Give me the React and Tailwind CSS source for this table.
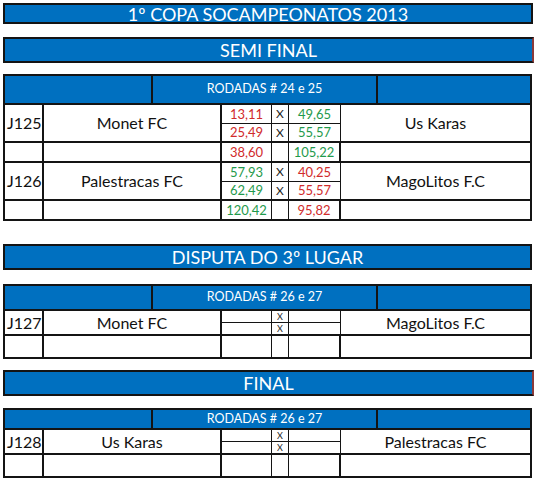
const font = { fontFamily: "Lato, 'Open Sans', 'Liberation Sans', sans-serif" };

const Bar = ({ text, className = "" }) => (
  <div
    className={`h-[26px] border-2 border-[#141414] bg-[#0070c0] flex items-center justify-center text-white text-[18px] leading-none ${className}`}
  >
    {text}
  </div>
);

const Score = ({ v, c, bottom }) => (
  <div
    className={`flex items-center justify-center text-[13px] leading-none border-r border-[#141414] ${bottom ? "border-b" : ""} ${c === "r" ? "text-[#d12b2b]" : "text-[#1f9a4c]"}`}
  >
    {v}
  </div>
);

const Xc = ({ show, bottom, small }) => (
  <div
    className={`flex items-center justify-center leading-none border-r border-[#141414] text-[#222] ${small ? "text-[9px]" : "text-[12px]"} ${bottom ? "border-b" : ""}`}
  >
    {show ? "X" : ""}
  </div>
);

const MatchRow = ({ id, home, away, s, sub, last }) => (
  <div
    className={`grid grid-cols-[39px_178px_50px_17px_52px_1fr] ${sub} ${last ? "" : "border-b-2 border-[#141414]"}`}
  >
    <div className="row-span-2 border-r-2 border-[#141414] flex items-center pl-[2px] text-[16px] text-[#111]">
      {id}
    </div>
    <div className="row-span-2 border-r-2 border-[#141414] flex items-center justify-center text-[16px] text-[#111]">
      {home}
    </div>
    <Score v={s ? s[0][0] : ""} c={s ? s[0][1] : "r"} bottom />
    <Xc show bottom small={!s} />
    <Score v={s ? s[0][2] : ""} c={s ? s[0][3] : "g"} bottom />
    <div className="row-span-2 flex items-center justify-center text-[16px] text-[#111]">
      {away}
    </div>
    <Score v={s ? s[1][0] : ""} c={s ? s[1][1] : "r"} />
    <Xc show small={!s} />
    <Score v={s ? s[1][2] : ""} c={s ? s[1][3] : "g"} />
  </div>
);

const TotalRow = ({ a, b, h, last }) => (
  <div
    className={`grid grid-cols-[39px_178px_50px_17px_52px_1fr] ${h} ${last ? "" : "border-b-2 border-[#141414]"}`}
  >
    <div className="border-r-2 border-[#141414]" />
    <div className="border-r-2 border-[#141414]" />
    <Score v={a ? a[0] : ""} c={a ? a[1] : "r"} />
    <Xc />
    <div
      className={`flex items-center justify-center text-[13px] leading-none border-r-2 border-[#141414] ${b && b[1] === "r" ? "text-[#d12b2b]" : "text-[#1f9a4c]"}`}
    >
      {b ? b[0] : ""}
    </div>
    <div />
  </div>
);

const Header = ({ text, h }) => (
  <div
    className={`grid grid-cols-[148px_225px_1fr] ${h} bg-[#0070c0] border-b-2 border-[#141414] text-white`}
  >
    <div className="border-r-2 border-[#141414]" />
    <div className="border-r-2 border-[#141414] flex items-center justify-center text-[12.5px] leading-none">
      {text}
    </div>
    <div />
  </div>
);

export default function App() {
  return (
    <div className="w-[535px] h-[483px] bg-white overflow-hidden" style={font}>
      <div className="pt-[3px] pl-[3px] w-[534px]">
        <div className="h-[21px] mr-[1px] border-2 border-[#141414] bg-[#0070c0] flex items-center justify-center text-white text-[18px] leading-none">
          1º COPA SOCAMPEONATOS 2013
        </div>

        <Bar text="SEMI FINAL" className="mt-[13px] border-r-[#8b3a3a]" />

        <div className="mt-[11px] mr-[2px] border-2 border-[#141414]">
          <Header text="RODADAS # 24 e 25" h="h-[29px]" />
          <MatchRow
            id="J125"
            home="Monet FC"
            away="Us Karas"
            sub="grid-rows-[19px_17px]"
            s={[
              ["13,11", "r", "49,65", "g"],
              ["25,49", "r", "55,57", "g"],
            ]}
          />
          <TotalRow a={["38,60", "r"]} b={["105,22", "g"]} h="h-[20px]" />
          <MatchRow
            id="J126"
            home="Palestracas FC"
            away="MagoLitos F.C"
            sub="grid-rows-[19px_17px]"
            s={[
              ["57,93", "g", "40,25", "r"],
              ["62,49", "g", "55,57", "r"],
            ]}
          />
          <TotalRow a={["120,42", "g"]} b={["95,82", "r"]} h="h-[18px]" last />
        </div>

        <Bar text="DISPUTA DO 3º LUGAR" className="mt-[23px] mr-[2px]" />

        <div className="mt-[14px] mr-[2px] border-2 border-[#141414]">
          <Header text="RODADAS # 26 e 27" h="h-[25px]" />
          <MatchRow
            id="J127"
            home="Monet FC"
            away="MagoLitos F.C"
            sub="grid-rows-[12px_11px]"
          />
          <TotalRow h="h-[21px]" last />
        </div>

        <Bar text="FINAL" className="mt-[11px] border-r-[#8b3a3a]" />

        <div className="mt-[12px] mr-[2px] border-2 border-[#141414]">
          <Header text="RODADAS # 26 e 27" h="h-[20px]" />
          <MatchRow
            id="J128"
            home="Us Karas"
            away="Palestracas FC"
            sub="grid-rows-[12px_11px]"
          />
          <TotalRow h="h-[21px]" last />
        </div>
      </div>
    </div>
  );
}
